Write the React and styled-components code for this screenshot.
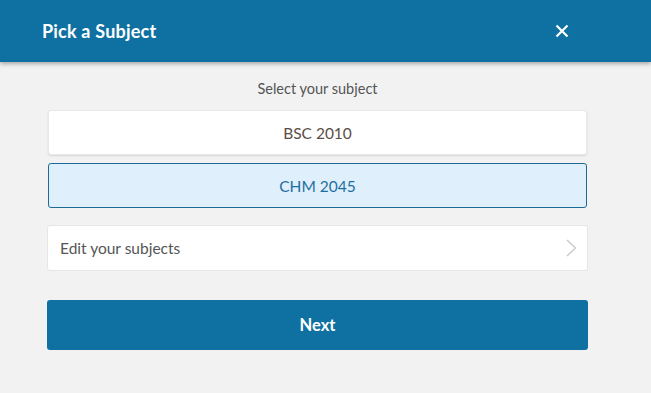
import React, { useState } from 'react'
import styled, { createGlobalStyle } from 'styled-components'

const GlobalStyle = createGlobalStyle`
  html, body {
    margin: 0;
    padding: 0;
    background: #f2f2f2;
    font-family: Lato, "Open Sans", sans-serif;
  }
`

const Page = styled.div`
  width: 651px;
  height: 393px;
  background: #f2f2f2;
  overflow: hidden;
`

const Header = styled.header`
  height: 62px;
  background: #0f71a2;
  display: flex;
  align-items: center;
  justify-content: space-between;
  padding: 0 82px 0 42px;
  box-shadow: 0 2px 4px rgba(0, 0, 0, 0.3);
  position: relative;
  z-index: 1;
`

const Title = styled.h1`
  margin: 0;
  color: #fff;
  font-size: 18px;
  font-weight: 700;
  letter-spacing: 0.2px;
`

const CloseButton = styled.button`
  border: none;
  background: none;
  padding: 0;
  width: 14px;
  height: 14px;
  display: flex;
  cursor: pointer;
`

const Body = styled.div`
  width: 541px;
  margin-left: 47px;
  padding-top: 18px;
  display: flex;
  flex-direction: column;
`

const Prompt = styled.p`
  margin: 0 0 13px;
  text-align: center;
  color: #555;
  font-size: 14.5px;
`

const SubjectList = styled.div`
  display: flex;
  flex-direction: column;
  gap: 8px;
  padding: 0 1px;
`

const SubjectCard = styled.button`
  height: 45px;
  border-radius: 3px;
  font-family: inherit;
  font-size: 15.5px;
  cursor: pointer;
  border: 1px solid ${p => (p.$active ? '#1b6a97' : '#e9e9e9')};
  background: ${p => (p.$active ? '#dff0fc' : '#fff')};
  color: ${p => (p.$active ? '#1e6f9f' : '#5a4d46')};
  box-shadow: ${p => (p.$active ? 'none' : '0 1px 2px rgba(0,0,0,0.12)')};
`

const EditRow = styled.div`
  margin-top: 17px;
  height: 44px;
  background: #fff;
  border: 1px solid #e6e6e6;
  border-radius: 3px;
  display: flex;
  align-items: center;
  justify-content: space-between;
  padding: 0 10px 0 12px;
  color: #555;
  font-size: 15.5px;
`

const NextButton = styled.button`
  margin-top: 29px;
  height: 50px;
  border: none;
  border-radius: 3px;
  background: #0f71a2;
  color: #fff;
  font-family: inherit;
  font-size: 16.5px;
  font-weight: 700;
  cursor: pointer;
`

const subjects = ['BSC 2010', 'CHM 2045']

export default function App() {
  const [selected, setSelected] = useState('CHM 2045')

  return (
    <Page>
      <GlobalStyle />
      <Header>
        <Title>Pick a Subject</Title>
        <CloseButton aria-label="Close">
          <svg width="14" height="14" viewBox="0 0 14 14">
            <path d="M1.5 1.5 L12.5 12.5 M12.5 1.5 L1.5 12.5" stroke="#fff" strokeWidth="2.2" />
          </svg>
        </CloseButton>
      </Header>
      <Body>
        <Prompt>Select your subject</Prompt>
        <SubjectList>
          {subjects.map(s => (
            <SubjectCard key={s} $active={s === selected} onClick={() => setSelected(s)}>
              {s}
            </SubjectCard>
          ))}
        </SubjectList>
        <EditRow>
          <span>Edit your subjects</span>
          <svg width="11" height="18" viewBox="0 0 11 18">
            <path d="M1 1 L9.5 9 L1 17" fill="none" stroke="#c8c8c8" strokeWidth="1.3" />
          </svg>
        </EditRow>
        <NextButton>Next</NextButton>
      </Body>
    </Page>
  )
}
